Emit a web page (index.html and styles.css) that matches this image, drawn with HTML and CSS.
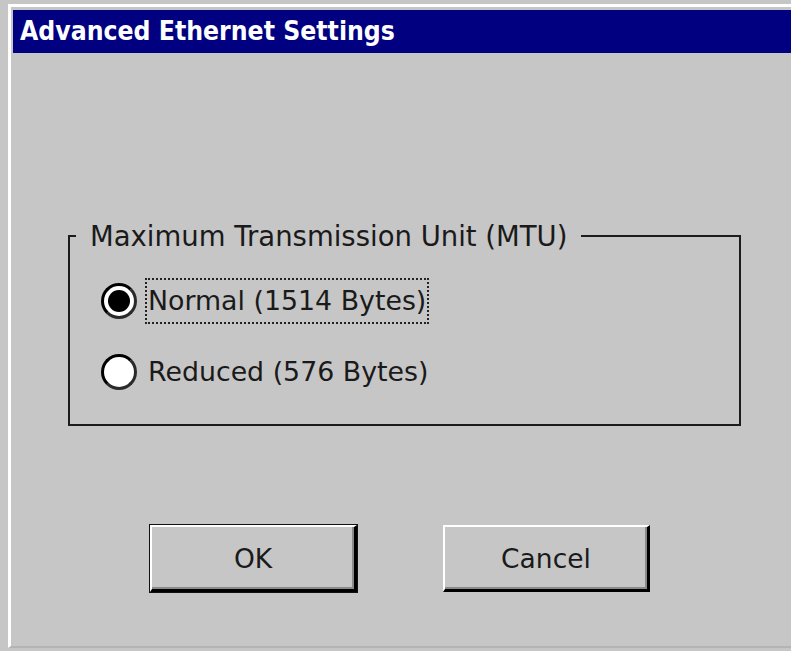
FILE: index.html
```html
<!DOCTYPE html>
<html lang="en">
<head>
<meta charset="utf-8">
<title>Advanced Ethernet Settings</title>
<link rel="stylesheet" href="styles.css">
</head>
<body>
<div class="window">
  <div class="titlebar">Advanced Ethernet Settings</div>
  <div class="client">
    <fieldset class="group">
      <legend class="group-title">Maximum Transmission Unit (MTU)</legend>
      <label class="option">
        <span class="radio checked"></span>
        <span class="caption focused">Normal (1514 Bytes)</span>
      </label>
      <label class="option">
        <span class="radio"></span>
        <span class="caption">Reduced (576 Bytes)</span>
      </label>
    </fieldset>
    <div class="buttons">
      <button class="btn default" type="button">OK</button>
      <button class="btn" type="button">Cancel</button>
    </div>
  </div>
</div>
</body>
</html>
```

FILE: styles.css
```css
html, body {
  margin: 0;
  height: 651px;
  overflow: hidden;
}

body {
  background: #c6c6c6;
  font-family: "DejaVu Sans", sans-serif;
  color: #000;
}

.window {
  margin: 4px 0 0 8px;
  height: 644px;
  box-sizing: border-box;
  border-top: 3px solid #fff;
  border-left: 3px solid #fff;
  border-bottom: 2px solid #b4b4b4;
  background: #c6c6c6;
}

.titlebar {
  margin: 3px 0 0 2px;
  height: 43px;
  line-height: 43px;
  padding-left: 7px;
  background: #000080;
  color: #fff;
  font-family: "DejaVu Sans Condensed", "DejaVu Sans", sans-serif;
  font-weight: bold;
  font-size: 26.3px;
  white-space: nowrap;
}

.client {
  padding: 167px 0 0 57px;
}

.group {
  margin: 0;
  width: 673px;
  height: 206px;
  box-sizing: border-box;
  padding: 13px 0 0 0;
  border: 2px solid #1c1c1c;
}

.group-title {
  margin-left: 6px;
  padding: 0 14px;
  font-size: 27.5px;
  line-height: 32px;
  color: #1a1a1a;
}

.option {
  display: flex;
  align-items: center;
  height: 71px;
  padding-left: 31px;
  font-size: 26.8px;
  color: #1a1a1a;
}

.radio {
  width: 36px;
  height: 36px;
  box-sizing: border-box;
  border-radius: 50%;
  border: 3px solid #000;
  border-bottom-color: #2a2a2a;
  border-right-color: #2a2a2a;
  background: #fff;
  display: flex;
  align-items: center;
  justify-content: center;
  flex: none;
}

.radio.checked::after {
  content: "";
  width: 22px;
  height: 22px;
  border-radius: 50%;
  background: #000;
}

.caption {
  margin-left: 8px;
  padding: 5px 1px 6px 1px;
  border: 2px dotted transparent;
  white-space: nowrap;
}

.caption.focused {
  border-color: #222;
}

.buttons {
  display: flex;
  gap: 86px;
  margin: 99px 0 0 82px;
}

.btn {
  width: 207px;
  height: 67px;
  box-sizing: border-box;
  background: #c6c6c6;
  border-style: solid;
  border-width: 2px 3px 3px 2px;
  border-color: #fff #000 #000 #fff;
  box-shadow: inset -2px -2px 0 #8a8a8a;
  font-family: inherit;
  font-size: 26.5px;
  color: #1a1a1a;
  padding: 0;
}

.btn.default {
  outline: 1px solid #111;
}
```
